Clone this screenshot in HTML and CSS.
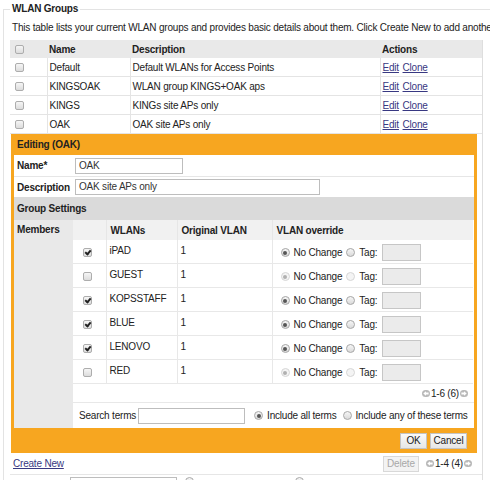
FILE: index.html
```html
<!DOCTYPE html>
<html>
<head>
<meta charset="utf-8">
<title>WLAN Groups</title>
<link rel="stylesheet" href="styles.css">
</head>
<body>
<fieldset class="groups">
  <legend>WLAN Groups</legend>
  <p class="intro">This table lists your current WLAN groups and provides basic details about them. Click Create New to add another.</p>
  <div class="frame">
    <table class="list">
      <colgroup><col class="w-chk"><col class="w-name"><col class="w-desc"><col class="w-act"></colgroup>
      <thead>
        <tr><th class="chk"><span class="cb"></span></th><th>Name</th><th>Description</th><th>Actions</th></tr>
      </thead>
      <tbody>
        <tr><td class="chk"><span class="cb"></span></td><td>Default</td><td>Default WLANs for Access Points</td><td><a class="lnk">Edit</a> <a class="lnk">Clone</a></td></tr>
        <tr><td class="chk"><span class="cb"></span></td><td>KINGSOAK</td><td>WLAN group KINGS+OAK aps</td><td><a class="lnk">Edit</a> <a class="lnk">Clone</a></td></tr>
        <tr><td class="chk"><span class="cb"></span></td><td>KINGS</td><td>KINGs site APs only</td><td><a class="lnk">Edit</a> <a class="lnk">Clone</a></td></tr>
        <tr><td class="chk"><span class="cb"></span></td><td>OAK</td><td>OAK site APs only</td><td><a class="lnk">Edit</a> <a class="lnk">Clone</a></td></tr>
      </tbody>
    </table>

    <div class="edit">
      <div class="edit-head">Editing (OAK)</div>
      <div class="edit-body">
        <div class="form-row">
          <div class="lbl">Name*</div>
          <div class="val"><span class="field f-name">OAK</span></div>
        </div>
        <div class="form-row">
          <div class="lbl">Description</div>
          <div class="val"><span class="field f-desc">OAK site APs only</span></div>
        </div>
        <div class="section">Group Settings</div>
        <div class="members">
          <div class="members-lbl">Members</div>
          <div class="members-body">
            <table class="wlans">
              <colgroup><col class="v-chk"><col class="v-name"><col class="v-vlan"><col class="v-ovr"></colgroup>
              <thead>
                <tr><th></th><th>WLANs</th><th>Original VLAN</th><th>VLAN override</th></tr>
              </thead>
              <tbody>
                <tr>
                  <td class="chk"><span class="cb on"></span></td><td class="t">iPAD</td><td class="t">1</td>
                  <td><div class="ovr"><span class="rd on"></span><span>No Change</span><span class="rd"></span><span>Tag:</span><span class="tag"></span></div></td>
                </tr>
                <tr>
                  <td class="chk"><span class="cb"></span></td><td class="t">GUEST</td><td class="t">1</td>
                  <td><div class="ovr"><span class="rd on dis"></span><span>No Change</span><span class="rd dis"></span><span>Tag:</span><span class="tag"></span></div></td>
                </tr>
                <tr>
                  <td class="chk"><span class="cb on"></span></td><td class="t">KOPSSTAFF</td><td class="t">1</td>
                  <td><div class="ovr"><span class="rd on"></span><span>No Change</span><span class="rd"></span><span>Tag:</span><span class="tag"></span></div></td>
                </tr>
                <tr>
                  <td class="chk"><span class="cb on"></span></td><td class="t">BLUE</td><td class="t">1</td>
                  <td><div class="ovr"><span class="rd on"></span><span>No Change</span><span class="rd"></span><span>Tag:</span><span class="tag"></span></div></td>
                </tr>
                <tr>
                  <td class="chk"><span class="cb on"></span></td><td class="t">LENOVO</td><td class="t">1</td>
                  <td><div class="ovr"><span class="rd on"></span><span>No Change</span><span class="rd"></span><span>Tag:</span><span class="tag"></span></div></td>
                </tr>
                <tr>
                  <td class="chk"><span class="cb"></span></td><td class="t">RED</td><td class="t">1</td>
                  <td><div class="ovr"><span class="rd on dis"></span><span>No Change</span><span class="rd dis"></span><span>Tag:</span><span class="tag"></span></div></td>
                </tr>
              </tbody>
            </table>
            <div class="pager-row">
              <span class="pager">
                <svg class="arr" width="8" height="7" viewBox="0 0 8 7"><rect width="8" height="7" rx="3.5" fill="#b9b9b9"/><path d="M1.3 3.5 L4 1.2 V2.6 H6.6 V4.4 H4 V5.8 Z" fill="#fff"/></svg>
                <span>1-6 (6)</span>
                <svg class="arr" width="8" height="7" viewBox="0 0 8 7"><rect width="8" height="7" rx="3.5" fill="#b9b9b9"/><path d="M6.7 3.5 L4 1.2 V2.6 H1.4 V4.4 H4 V5.8 Z" fill="#fff"/></svg>
              </span>
            </div>
            <div class="search-row">
              <span class="s-lbl">Search terms</span>
              <span class="field f-search"></span>
              <span class="rd on"></span><span>Include all terms</span>
              <span class="rd r2"></span><span>Include any of these terms</span>
            </div>
          </div>
        </div>
      </div>
      <div class="edit-foot">
        <span class="btn b-ok">OK</span><span class="btn b-cancel">Cancel</span>
      </div>
    </div>

    <div class="below">
      <a class="lnk">Create New</a>
      <div class="below-right">
        <span class="btn disabled">Delete</span>
        <span class="pager">
          <svg class="arr" width="8" height="7" viewBox="0 0 8 7"><rect width="8" height="7" rx="3.5" fill="#b9b9b9"/><path d="M1.3 3.5 L4 1.2 V2.6 H6.6 V4.4 H4 V5.8 Z" fill="#fff"/></svg>
          <span>1-4 (4)</span>
          <svg class="arr" width="8" height="7" viewBox="0 0 8 7"><rect width="8" height="7" rx="3.5" fill="#b9b9b9"/><path d="M6.7 3.5 L4 1.2 V2.6 H1.4 V4.4 H4 V5.8 Z" fill="#fff"/></svg>
        </span>
      </div>
    </div>
    <div class="filter-row">
      <span class="field f-filter"></span>
      <span class="rd"></span><span class="gap"></span><span class="rd"></span>
    </div>
  </div>
</fieldset>
</body>
</html>
```

FILE: styles.css
```css
html, body {
  margin: 0;
  padding: 0;
  background: #fff;
  overflow: hidden;
}
body {
  width: 490px;
  height: 480px;
  font-family: "Liberation Sans", Arial, sans-serif;
  font-size: 10px;
  letter-spacing: -0.2px;
  color: #222;
}
.groups {
  margin: 3px 0 0 3px;
  padding: 0 0 0 6px;
  border: 1px solid #e3e3e3;
  border-right: none;
  border-bottom: none;
  width: 487px;
  height: 477px;
  box-sizing: border-box;
  overflow: hidden;
}
.groups legend {
  font-weight: bold;
  font-size: 10px;
  line-height: 12px;
  padding: 0 2px;
}
.intro {
  margin: 6px 0 5px 2px;
  line-height: 14px;
  white-space: nowrap;
}
.frame {
  width: 473px;
  box-sizing: border-box;
  border-right: 1px solid #dedede;
}
.lnk {
  color: #383882;
  text-decoration: underline;
}

/* checkbox & radio */
.cb {
  display: inline-block;
  width: 9px;
  height: 9px;
  box-sizing: border-box;
  border: 1px solid #adadad;
  border-radius: 2px;
  background: linear-gradient(#f6f6f6, #dcdcdc);
  position: relative;
  vertical-align: middle;
}
.cb.on::after {
  content: "";
  position: absolute;
  left: 2px;
  top: 0px;
  width: 2px;
  height: 4px;
  border: solid #222;
  border-width: 0 2px 2px 0;
  transform: rotate(40deg);
}
.rd {
  display: inline-block;
  width: 9px;
  height: 9px;
  box-sizing: border-box;
  border: 1px solid #a8a8a8;
  border-radius: 50%;
  background: linear-gradient(#f6f6f6, #dadada);
  position: relative;
  flex: none;
}
.rd.on::after {
  content: "";
  position: absolute;
  left: 1.5px;
  top: 1.5px;
  width: 4px;
  height: 4px;
  border-radius: 50%;
  background: #555;
}
.rd.dis {
  border-color: #d6d6d6;
  background: #f4f4f4;
}
.rd.dis.on::after {
  background: #b0b0b0;
}

/* main list */
.list {
  width: 472px;
  border-collapse: collapse;
  table-layout: fixed;
}
.w-chk { width: 37px; }
.w-name { width: 83px; }
.w-desc { width: 250px; }
.w-act { width: 102px; }
.list th {
  height: 18px;
  padding: 0 2px;
  text-align: left;
  font-weight: bold;
  background: #e9e9e9;
}
.list td {
  height: 18px;
  padding: 0 2px;
  border-bottom: 1px solid #e4e4e4;
  border-left: 1px solid #e4e4e4;
  white-space: nowrap;
}
.list td.chk, .list th.chk {
  border-left: none;
  padding-left: 5px;
}
.list .lnk { margin-right: 1px; }

/* edit panel */
.edit {
  margin-left: 1px;
  width: 466px;
  background: #f7a620;
  padding: 0 3px;
  box-sizing: border-box;
}
.edit-head {
  height: 21px;
  line-height: 21px;
  font-weight: bold;
  padding-left: 3px;
}
.edit-body {
  background: #fff;
}
.form-row {
  display: flex;
  align-items: center;
  height: 21px;
  border-bottom: 1px solid #e6e6e6;
}
.form-row + .form-row {
  height: 20px;
  border-bottom: none;
}
.lbl {
  width: 59px;
  padding-left: 3px;
  box-sizing: border-box;
  font-weight: bold;
}
.val {
  padding-left: 2px;
  display: flex;
}
.field {
  display: inline-block;
  height: 16px;
  line-height: 14px;
  box-sizing: border-box;
  border: 1px solid #bdbdbd;
  padding: 0 3px;
  background: #fff;
  color: #333;
  flex: none;
}
.f-name { width: 108px; }
.f-desc { width: 245px; }
.section {
  height: 23px;
  line-height: 23px;
  background: #dadada;
  font-weight: bold;
  padding-left: 3px;
}
.members {
  display: flex;
}
.members-lbl {
  width: 59px;
  flex: none;
  background: #e9e9e9;
  font-weight: bold;
  padding: 4px 0 0 3px;
  box-sizing: border-box;
}
.members-body {
  flex: 1;
}
.wlans {
  width: 400px;
  border-collapse: collapse;
  table-layout: fixed;
}
.v-chk { width: 33px; }
.v-name { width: 71px; }
.v-vlan { width: 95px; }
.v-ovr { width: 201px; }
.wlans th {
  height: 20px;
  padding: 0 3px 0 4px;
  background: #f1f1f1;
  text-align: left;
  font-weight: bold;
  border-left: 1px solid #e6e6e6;
}
.wlans th:first-child { border-left: none; }
.wlans td {
  height: 23px;
  padding: 0 3px;
  border-bottom: 1px solid #e8e8e8;
  border-left: 1px solid #e8e8e8;
  vertical-align: middle;
}
.wlans td.chk {
  border-left: none;
  padding-left: 10px;
}
.wlans td.t {
  vertical-align: top;
  padding-top: 5px;
  height: 18px;
}
.ovr {
  display: flex;
  align-items: center;
  gap: 4px;
  padding-left: 5px;
  padding-top: 2px;
  white-space: nowrap;
}
.tag {
  display: inline-block;
  width: 39px;
  height: 17px;
  box-sizing: border-box;
  border: 1px solid #c6c6c6;
  background: #ebebeb;
  margin-left: 1px;
}
.pager-row {
  height: 18px;
  border-bottom: 1px solid #e8e8e8;
  display: flex;
  align-items: center;
  justify-content: flex-end;
  padding-right: 6px;
}
.pager {
  display: inline-flex;
  align-items: center;
  gap: 1px;
  white-space: nowrap;
}
.arr { display: block; }
.search-row {
  height: 25px;
  display: flex;
  align-items: center;
  padding-left: 6px;
  gap: 4px;
  white-space: nowrap;
}
.search-row > * { flex: none; }
.s-lbl { margin-right: -2px; }
.f-search { width: 107px; margin-right: 5px; }
.search-row .r2 { margin-left: 2px; }
.edit-foot {
  height: 25px;
  display: flex;
  align-items: center;
  justify-content: flex-end;
  gap: 3px;
  padding-right: 7px;
}
.btn {
  display: inline-block;
  height: 16px;
  line-height: 14px;
  box-sizing: border-box;
  padding: 0 5px;
  border: 1px solid #c4c4c4;
  background: linear-gradient(#fafafa, #e6e6e6);
  color: #222;
  text-align: center;
}
.b-ok { width: 27px; padding: 0; }
.b-cancel { width: 37px; padding: 0; }
.btn.disabled {
  color: #a8a8a8;
  border-color: #d8d8d8;
  background: #f3f3f3;
  width: 36px;
  padding: 0;
}
.below {
  height: 21px;
  display: flex;
  align-items: center;
  justify-content: space-between;
  padding: 0 10px 0 3px;
  border-bottom: 1px solid #e6e6e6;
}
.below-right {
  display: flex;
  align-items: center;
  gap: 7px;
}
.filter-row {
  display: flex;
  align-items: flex-start;
  padding: 2px 0 0 60px;
  gap: 8px;
}
.f-filter { width: 107px; }
.gap { width: 85px; }
```
